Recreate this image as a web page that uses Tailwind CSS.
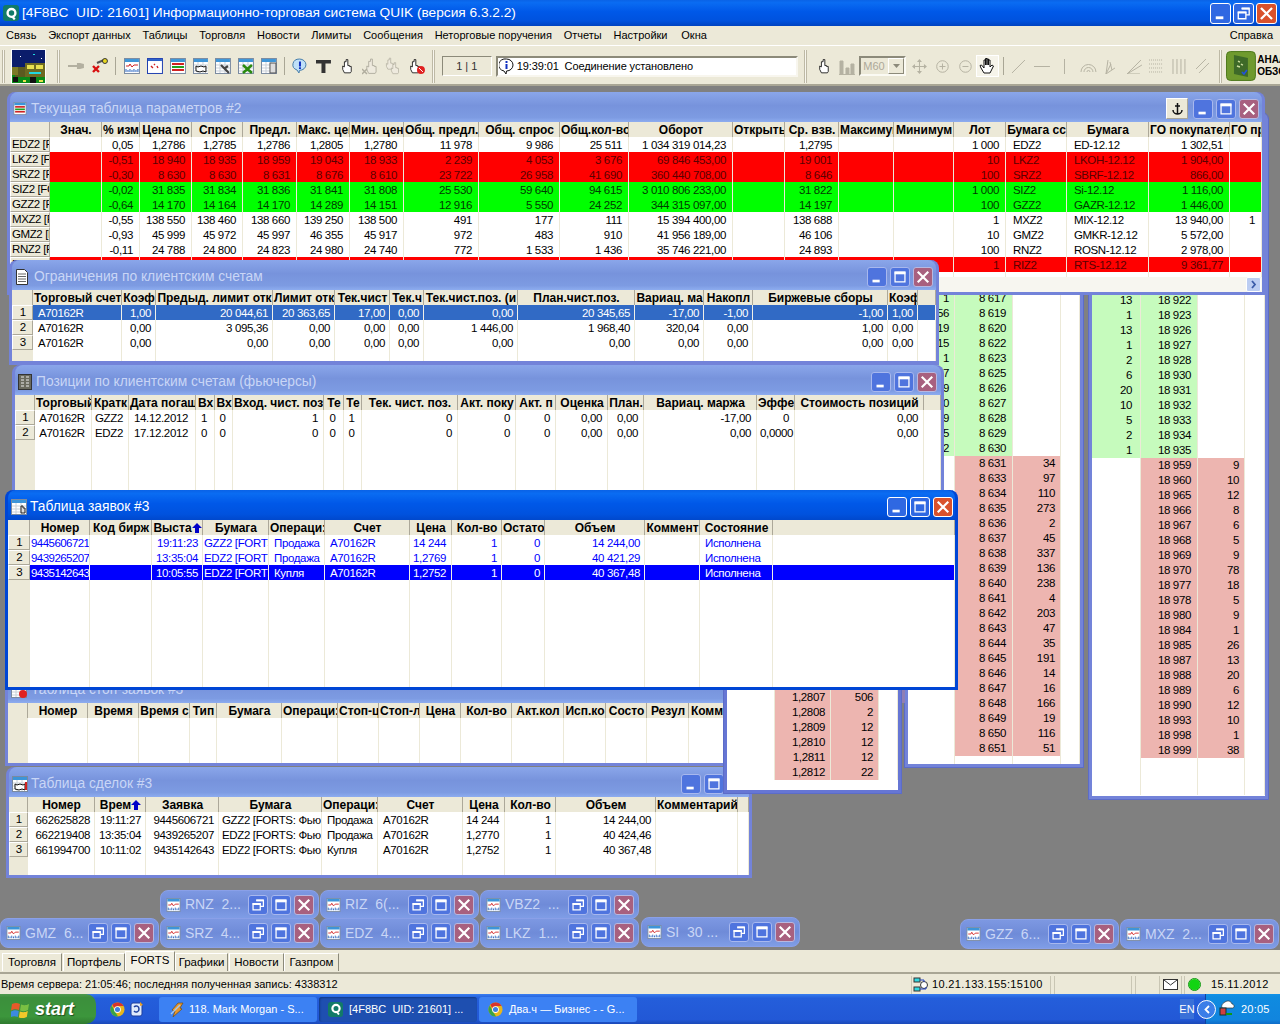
<!DOCTYPE html>
<html lang="ru">
<head>
<meta charset="utf-8">
<title>QUIK</title>
<script src="https://cdn.jsdelivr.net/npm/@tailwindcss/browser@4"></script>
</head>
<body class="m-0 overflow-hidden bg-[#808080]">
<svg class="hidden" xmlns="http://www.w3.org/2000/svg">
  <symbol id="b-min" viewBox="0 0 20 20"><rect x="5" y="13" width="8" height="3" fill="#fff"/></symbol>
  <symbol id="b-max" viewBox="0 0 20 20"><path d="M4.5 4.5h11v11h-11z" fill="none" stroke="#fff" stroke-width="1.4"/><rect x="4" y="4" width="12" height="3" fill="#fff"/></symbol>
  <symbol id="b-res" viewBox="0 0 20 20"><path d="M8 4.5h8v7h-3M4.500 8.500h8v7h-8z" fill="none" stroke="#fff" stroke-width="1.400"/><rect x="4" y="8" width="9" height="2" fill="#fff"/><rect x="8" y="4" width="8" height="2" fill="#fff"/></symbol>
  <symbol id="b-x" viewBox="0 0 20 20"><path d="M5 5l10 10M15 5L5 15" stroke="#fff" stroke-width="2.400" stroke-linecap="square"/></symbol>
  <symbol id="i-chart" viewBox="0 0 16 16"><rect x=".5" y=".5" width="15" height="15" fill="#fff" stroke="#7a8aa0"/><rect x="1" y="1" width="14" height="3" fill="#3d95d8"/><path d="M2 8h3l1-2 2 3 2-2h4" fill="none" stroke="#d02020"/><path d="M2 14v-3M4 14v-2M6 14v-3M8 14v-2M10 14v-3M12 14v-2M14 14v-3" stroke="#2060c0"/></symbol>
  <symbol id="i-table" viewBox="0 0 16 16"><rect x=".5" y=".5" width="15" height="15" fill="#fff" stroke="#7a8aa0"/><rect x="1" y="1" width="14" height="3" fill="#3d95d8"/><path d="M1 7h14M1 10h14M1 13h14M5 4v11M10 4v11" stroke="#c8d0d8"/></symbol>
  <symbol id="i-params" viewBox="0 0 16 16"><rect x=".5" y=".5" width="15" height="15" fill="#fff" stroke="#7a8aa0"/><rect x="1" y="1" width="14" height="3" fill="#3d95d8"/><rect x="2" y="5" width="12" height="2" fill="#d02020"/><rect x="2" y="8" width="12" height="2" fill="#20a020"/><rect x="2" y="11" width="12" height="2" fill="#d02020"/></symbol>
  <symbol id="i-hand" viewBox="0 0 14 18"><path d="M6 1.500h2v7l2 0v1h2v6l-1 1.500H4L2 13V9l2 1V4h2z" fill="#fff" stroke="#111"/></symbol>
  <symbol id="i-hand-g" viewBox="0 0 14 18"><path d="M6 1.500h2v7l2 0v1h2v6l-1 1.500H4L2 13V9l2 1V4h2z" fill="#eeeade" stroke="#b0ad9e"/></symbol>
  <symbol id="i-chrome" viewBox="0 0 16 16"><circle cx="8" cy="8" r="7.500" fill="#e8b61c"/><path d="M8 .5A7.500 7.500 0 0 1 14.500 4.200H8L4.400 6.500 2.500 2.900A7.500 7.500 0 0 1 8 .5z" fill="#d9342b"/><path d="M1.900 3.700 5.200 10l3.400 5.500A7.500 7.500 0 0 1 1.900 3.700z" fill="#3aa347"/><circle cx="8" cy="8" r="3.600" fill="#fff"/><circle cx="8" cy="8" r="2.700" fill="#3f7fe0"/></symbol>
</svg>

<div class="relative flex h-[1024px] w-[1280px] flex-col overflow-hidden font-['Liberation_Sans',sans-serif] text-[11px] leading-[15px] text-black">

  <!-- main title -->
  <header class="flex h-[26px] shrink-0 items-center bg-[linear-gradient(180deg,#0a63e6_0%,#0a6cf2_10%,#0058e8_45%,#0052de_80%,#0043c0_100%)] pl-[3px] pr-[3px]">
    <span class="mr-[3px] flex h-[16px] w-[16px] items-center justify-center rounded-[3px] bg-[#127a68]">
      <svg class="h-[13px] w-[13px]" viewBox="0 0 12 12"><circle cx="6" cy="5.500" r="3.600" fill="none" stroke="#fff" stroke-width="2.200"/><path d="M7 9l2 2.500" stroke="#fff" stroke-width="2"/></svg>
    </span>
    <span class="text-[13.700px] leading-[18px] text-white">[4F8BC&nbsp; UID: 21601] Информационно-торговая система QUIK (версия 6.3.2.2)</span>
    <span class="ml-auto flex gap-[2px]">
      <span class="h-[21px] w-[21px] rounded-[3px] border border-white bg-[#2f68e2]"><svg class="h-full w-full"><use href="#b-min"/></svg></span>
      <span class="h-[21px] w-[21px] rounded-[3px] border border-white bg-[#2f68e2]"><svg class="h-full w-full"><use href="#b-res"/></svg></span>
      <span class="h-[21px] w-[21px] rounded-[3px] border border-white bg-[#d9512c]"><svg class="h-full w-full"><use href="#b-x"/></svg></span>
    </span>
  </header>

  <!-- menu -->
  <nav class="flex h-[20px] shrink-0 items-center gap-[11.800px] border-b border-b-[#fff] bg-[#ece9d8] pl-[6px] pr-[7px]">
    <span>Связь</span><span>Экспорт данных</span><span>Таблицы</span><span>Торговля</span><span>Новости</span><span>Лимиты</span><span>Сообщения</span><span>Неторговые поручения</span><span>Отчеты</span><span>Настройки</span><span class="ml-[2px]">Окна</span><span class="ml-auto">Справка</span>
  </nav>

  <!-- toolbar -->
  <div class="flex h-[40px] shrink-0 items-center border-b-[2px] border-b-[#a9a695] bg-[#ece9d8] pt-[2px]">
    <span class="ml-[2px] h-[33px] w-[3px] border-x border-[#bdb9a5] bg-[#f8f6ee]"></span>
    <svg class="ml-[6px] h-[35px] w-[35px]" viewBox="0 0 35 35" shape-rendering="crispEdges">
      <rect width="35" height="35" fill="#fff"/><rect x="1" y="1" width="33" height="33" fill="#0b1d6b"/>
      <rect x="1" y="22" width="33" height="12" fill="#0b8a18"/>
      <rect x="4" y="18" width="10" height="10" fill="#5c5a20"/><rect x="1" y="18" width="6" height="8" fill="#7b7a26"/>
      <rect x="14" y="14" width="20" height="14" fill="#6d6a22"/><rect x="16" y="16" width="7" height="4" fill="#e8e050"/><rect x="25" y="16" width="7" height="4" fill="#e8e050"/><rect x="18" y="23" width="12" height="2" fill="#20d8e0"/>
      <rect x="2" y="28" width="5" height="5" fill="#111"/><rect x="19" y="28" width="6" height="6" fill="#111"/><rect x="28" y="31" width="4" height="2" fill="#e8e050"/><rect x="12" y="31" width="3" height="2" fill="#e8e050"/>
      <rect x="9" y="7" width="1" height="1" fill="#fff"/><rect x="22" y="5" width="2" height="1" fill="#20d8e0"/><rect x="30" y="9" width="1" height="1" fill="#fff"/>
    </svg>
    <span class="ml-[11px] h-[33px] w-[3px] border-x border-[#bdb9a5] bg-[#f8f6ee]"></span>
    <svg class="ml-[8px] h-[10px] w-[17px]" viewBox="0 0 17 10"><path d="M0 4h9V2h3l4 1v4l-4 1H9V6H0z" fill="#b3b0a0"/></svg>
    <svg class="ml-[7px] h-[16px] w-[16px]" viewBox="0 0 16 16"><path d="M5 5l7-3" stroke="#555" stroke-width="2"/><circle cx="13" cy="3" r="2.500" fill="#e8d820" stroke="#333"/><path d="M1 8l6 6M7 8l-6 6" stroke="#d81010" stroke-width="2.400"/></svg>
    <span class="ml-[7px] h-[18px] w-px bg-[#a9a695]"></span>
    <svg class="ml-[8px] h-[16px] w-[16px]"><use href="#i-chart"/></svg>
    <svg class="ml-[7px] h-[16px] w-[16px]" viewBox="0 0 16 16"><rect x=".5" y=".5" width="15" height="15" fill="#fff" stroke="#2040b0"/><rect x="1" y="1" width="14" height="2" fill="#2a60c8"/><path d="M4 8l2 2M7 6l1 1M10 8l1 2" stroke="#d02020" stroke-width="1.400"/></svg>
    <svg class="ml-[7px] h-[16px] w-[16px]"><use href="#i-params"/></svg>
    <svg class="ml-[7px] h-[16px] w-[16px]" viewBox="0 0 16 16"><use href="#i-table"/><path d="M3 8l2 1 3-1 3 1 2-1v6l-3-1-3 1-4-1z" fill="#fff" stroke="#111"/></svg>
    <svg class="ml-[7px] h-[16px] w-[16px]" viewBox="0 0 16 16"><use href="#i-table"/><path d="M6 7l3 3 5 5M13 8l-4 3" stroke="#444" stroke-width="2.200"/></svg>
    <svg class="ml-[7px] h-[16px] w-[16px]" viewBox="0 0 16 16"><use href="#i-table"/><path d="M5 7l9 8M14 7l-9 8" stroke="#2a8a10" stroke-width="2.600"/></svg>
    <svg class="ml-[7px] h-[16px] w-[16px]" viewBox="0 0 16 16"><use href="#i-table"/><rect x="9" y="5" width="6" height="10" fill="#ddd" stroke="#555"/></svg>
    <span class="ml-[7px] h-[18px] w-px bg-[#a9a695]"></span>
    <svg class="ml-[7px] h-[16px] w-[15px]" viewBox="0 0 15 16"><path d="M7.500 1a6.500 5.700 0 0 1 0 11.400L7 15l-2-3a6.500 5.700 0 0 1 2.500-11z" fill="#bfe0f8" stroke="#457ca8"/><rect x="7" y="3.500" width="2" height="5" fill="#1030c0"/><rect x="7" y="9.300" width="2" height="1.700" fill="#1030c0"/></svg>
    <svg class="ml-[9px] h-[13px] w-[15px]" viewBox="0 0 15 13"><path d="M0 0h15v3.500H9.500V13h-4V3.500H0z" fill="#333"/></svg>
    <svg class="ml-[10px] h-[18px] w-[12px]"><use href="#i-hand"/></svg>
    <svg class="ml-[9px] h-[18px] w-[16px]" viewBox="0 0 16 18"><use href="#i-hand-g" x="3" width="13" height="18"/><path d="M0 12l5 5M5 12l-5 5" stroke="#b0ad9e" stroke-width="1.500"/></svg>
    <svg class="ml-[7px] h-[18px] w-[15px]" viewBox="0 0 15 18"><use href="#i-hand-g" width="10" height="13"/><use href="#i-hand-g" x="5" y="4" width="10" height="14"/></svg>
    <svg class="ml-[9px] h-[18px] w-[17px]" viewBox="0 0 17 18"><use href="#i-hand" width="12" height="18"/><circle cx="12" cy="13" r="4" fill="#e02020"/><path d="M10 11l4 4" stroke="#fff"/></svg>
    <span class="ml-[6px] h-[33px] w-[3px] border-x border-[#bdb9a5] bg-[#f8f6ee]"></span>
    <span class="ml-[7px] flex h-[20px] w-[50px] items-center justify-center border border-t-[#8c8a7a] border-l-[#8c8a7a] border-r-white border-b-white text-[#333]">1 | 1</span>
    <span class="ml-[4px] flex h-[21px] w-[304px] items-center border-[2px] border-t-[#8c8a7a] border-l-[#8c8a7a] border-r-[#f8f6ee] border-b-[#f8f6ee] bg-white">
      <svg class="ml-[1px] h-[17px] w-[15px]" viewBox="0 0 15 17"><path d="M7.500 1a6.500 6 0 0 1 0 12L7 16l-2-3a6.500 6 0 0 1 2.500-12z" fill="#fff" stroke="#111"/><rect x="6.500" y="6" width="2" height="5" fill="#1030c0"/><rect x="6.500" y="3" width="2" height="2" fill="#1030c0"/></svg>
      <span class="ml-[3px] tracking-[-.1px]">19:39:01&nbsp; Соединение установлено</span>
    </span>
    <span class="ml-[6px] h-[33px] w-[3px] border-x border-[#bdb9a5] bg-[#f8f6ee]"></span>
    <svg class="ml-[11px] h-[18px] w-[12px]"><use href="#i-hand"/></svg>
    <svg class="ml-[9px] h-[17px] w-[16px]" viewBox="0 0 16 17"><path d="M0 16.500h16M1 3v13h3V3zM7 10v6h3v-6zM12 6v10h3V6z" fill="#b5b2a2" stroke="#b5b2a2"/></svg>
    <span class="ml-[4px] flex h-[20px] w-[47px] items-center border-[2px] border-t-[#8c8a7a] border-l-[#8c8a7a] border-r-[#fbfaf3] border-b-[#fbfaf3] pl-[2px] text-[#aca899]">M60<span class="ml-auto flex h-[16px] w-[16px] items-center justify-center border border-[#fff] border-r-[#8c8a7a] border-b-[#8c8a7a] bg-[#ece9d8]"><svg class="h-[4px] w-[7px]" viewBox="0 0 7 4"><path d="M0 0h7L3.500 4z" fill="#8c8a7a"/></svg></span></span>
    <svg class="ml-[6px] h-[15px] w-[15px]" viewBox="0 0 15 15"><path d="M7.500 0l2.500 3H5zM7.500 15L5 12h5zM0 7.500L3 5v5zM15 7.500L12 5v5zM7 3h1v9H7zM3 7h9v1H3z" fill="#b5b2a2"/></svg>
    <svg class="ml-[9px] h-[13px] w-[13px]" viewBox="0 0 13 13"><circle cx="6.500" cy="6.500" r="5.800" fill="none" stroke="#b5b2a2"/><path d="M3.500 6.500h6M6.500 3.500v6" stroke="#b5b2a2"/></svg>
    <svg class="ml-[10px] h-[13px] w-[13px]" viewBox="0 0 13 13"><circle cx="6.500" cy="6.500" r="5.800" fill="none" stroke="#b5b2a2"/><path d="M3.500 6.500h6" stroke="#b5b2a2"/></svg>
    <span class="ml-[4px] flex h-[22px] w-[23px] items-center justify-center border border-white bg-[#f6f4ea]"><svg class="h-[18px] w-[16px]" viewBox="0 0 16 18"><path d="M5 8V3h1.500v5M6.500 8V1.500H8V8M8 8V2h1.500v6M9.500 8V3H11v7l2-2 1.500 1-3.500 7H5L2 11 1 8.500 2.500 8 5 11V8" fill="#fff" stroke="#111"/></svg></span>
    <span class="ml-[4px] h-[18px] w-px bg-[#a9a695]"></span>
    <svg class="ml-[7px] h-[15px] w-[15px]" viewBox="0 0 15 15"><path d="M1 14L14 1" stroke="#b5b2a2"/></svg>
    <svg class="ml-[8px] h-[3px] w-[16px]" viewBox="0 0 16 3"><path d="M0 1.500h16" stroke="#b5b2a2"/></svg>
    <svg class="ml-[14px] h-[15px] w-[1px]" viewBox="0 0 1 15"><path d="M.5 0v15" stroke="#b5b2a2"/></svg>
    <svg class="ml-[15px] h-[11px] w-[17px]" viewBox="0 0 17 11"><path d="M1 11a7.500 7.500 0 0 1 15 0M4 11a4.500 4.500 0 0 1 9 0M7 11a1.500 1.500 0 0 1 3 0" fill="none" stroke="#b5b2a2"/></svg>
    <svg class="ml-[8px] h-[15px] w-[11px]" viewBox="0 0 11 15"><path d="M1 15l2-14M1 15l5-10M1 15l9-6M5 3l2 8" fill="none" stroke="#b5b2a2"/></svg>
    <svg class="ml-[11px] h-[15px] w-[15px]" viewBox="0 0 15 15"><path d="M0 15L14 1M0 15L15 6M0 15h13" fill="none" stroke="#b5b2a2"/></svg>
    <svg class="ml-[7px] h-[14px] w-[15px]" viewBox="0 0 15 14"><path d="M0 1h15M0 5h15M0 9h15M0 13h15" stroke="#b5b2a2" stroke-dasharray="1 1"/></svg>
    <svg class="ml-[9px] h-[15px] w-[15px]" viewBox="0 0 15 15"><path d="M1 0v15M5 0v15M9 0v15M13 0v15" stroke="#b5b2a2"/></svg>
    <svg class="ml-[9px] h-[14px] w-[13px]" viewBox="0 0 13 14"><path d="M0 10L10 0M3 14L13 4" stroke="#b5b2a2"/></svg>
    <span class="ml-[10px] h-[33px] w-[3px] border-x border-[#bdb9a5] bg-[#f8f6ee]"></span>
    <svg class="ml-[4px] h-[30px] w-[30px]" viewBox="0 0 30 30"><rect x=".5" y=".5" width="29" height="29" rx="4" fill="#6f9a2e" stroke="#4e7a1c"/><path d="M8 4l14 3v19L8 23z" fill="#3e6a28"/><path d="M12 10l2 1M15 13l2 1M11 15l3 1" stroke="#cfe0a0" stroke-width="1.400"/><path d="M16 21l2 2 3-4" fill="none" stroke="#2050e0" stroke-width="1.600"/></svg>
    <span class="ml-[1px] flex w-[23px] flex-col overflow-hidden whitespace-nowrap text-[10px] font-bold leading-[12px]"><span>АНАЛ</span><span>ОБЗОР</span></span>
  </div>

  <!-- MDI area -->
  <main class="relative flex-1 overflow-hidden bg-[#808080]">

    <!-- Glass 8 -->
    <section class="absolute left-[1089px] top-[27px] h-[686px] w-[179px] rounded-t-[6px] border-[3px] border-[#7383d9] bg-white pt-[177px] outline outline-1 outline-[#5c6cc8]">
      <table class="w-[173px] table-fixed border-separate border-spacing-0 [&_td]:h-[15px] [&_td]:overflow-hidden [&_td]:whitespace-nowrap [&_td]:border-r [&_td]:border-[#ece9d8] [&_td]:px-[5px] [&_td]:text-right [&_td]:text-[11.500px] [&_td]:leading-[15px] [&_td]:tracking-[-.35px]">
        <colgroup><col class="w-[49px]"><col class="w-[57px]"><col class="w-[47px]"><col class="w-[20px]"></colgroup>
        <tbody class="[&_td:nth-child(1)]:pr-[8px] [&_td:nth-child(2)]:pr-[6px]">
          <tr class="bg-[#c6fbbd]"><td>13</td><td>18 922</td><td class="bg-white"></td><td class="bg-white"></td></tr>
          <tr class="bg-[#c6fbbd]"><td>1</td><td>18 923</td><td class="bg-white"></td><td class="bg-white"></td></tr>
          <tr class="bg-[#c6fbbd]"><td>13</td><td>18 926</td><td class="bg-white"></td><td class="bg-white"></td></tr>
          <tr class="bg-[#c6fbbd]"><td>1</td><td>18 927</td><td class="bg-white"></td><td class="bg-white"></td></tr>
          <tr class="bg-[#c6fbbd]"><td>2</td><td>18 928</td><td class="bg-white"></td><td class="bg-white"></td></tr>
          <tr class="bg-[#c6fbbd]"><td>6</td><td>18 930</td><td class="bg-white"></td><td class="bg-white"></td></tr>
          <tr class="bg-[#c6fbbd]"><td>20</td><td>18 931</td><td class="bg-white"></td><td class="bg-white"></td></tr>
          <tr class="bg-[#c6fbbd]"><td>10</td><td>18 932</td><td class="bg-white"></td><td class="bg-white"></td></tr>
          <tr class="bg-[#c6fbbd]"><td>5</td><td>18 933</td><td class="bg-white"></td><td class="bg-white"></td></tr>
          <tr class="bg-[#c6fbbd]"><td>2</td><td>18 934</td><td class="bg-white"></td><td class="bg-white"></td></tr>
          <tr class="bg-[#c6fbbd]"><td>1</td><td>18 935</td><td class="bg-white"></td><td class="bg-white"></td></tr>
          <tr class="bg-[#edb5b0]"><td class="bg-white"></td><td>18 959</td><td>9</td><td class="bg-white"></td></tr>
          <tr class="bg-[#edb5b0]"><td class="bg-white"></td><td>18 960</td><td>10</td><td class="bg-white"></td></tr>
          <tr class="bg-[#edb5b0]"><td class="bg-white"></td><td>18 965</td><td>12</td><td class="bg-white"></td></tr>
          <tr class="bg-[#edb5b0]"><td class="bg-white"></td><td>18 966</td><td>8</td><td class="bg-white"></td></tr>
          <tr class="bg-[#edb5b0]"><td class="bg-white"></td><td>18 967</td><td>6</td><td class="bg-white"></td></tr>
          <tr class="bg-[#edb5b0]"><td class="bg-white"></td><td>18 968</td><td>5</td><td class="bg-white"></td></tr>
          <tr class="bg-[#edb5b0]"><td class="bg-white"></td><td>18 969</td><td>9</td><td class="bg-white"></td></tr>
          <tr class="bg-[#edb5b0]"><td class="bg-white"></td><td>18 970</td><td>78</td><td class="bg-white"></td></tr>
          <tr class="bg-[#edb5b0]"><td class="bg-white"></td><td>18 977</td><td>18</td><td class="bg-white"></td></tr>
          <tr class="bg-[#edb5b0]"><td class="bg-white"></td><td>18 978</td><td>5</td><td class="bg-white"></td></tr>
          <tr class="bg-[#edb5b0]"><td class="bg-white"></td><td>18 980</td><td>9</td><td class="bg-white"></td></tr>
          <tr class="bg-[#edb5b0]"><td class="bg-white"></td><td>18 984</td><td>1</td><td class="bg-white"></td></tr>
          <tr class="bg-[#edb5b0]"><td class="bg-white"></td><td>18 985</td><td>26</td><td class="bg-white"></td></tr>
          <tr class="bg-[#edb5b0]"><td class="bg-white"></td><td>18 987</td><td>13</td><td class="bg-white"></td></tr>
          <tr class="bg-[#edb5b0]"><td class="bg-white"></td><td>18 988</td><td>20</td><td class="bg-white"></td></tr>
          <tr class="bg-[#edb5b0]"><td class="bg-white"></td><td>18 989</td><td>6</td><td class="bg-white"></td></tr>
          <tr class="bg-[#edb5b0]"><td class="bg-white"></td><td>18 990</td><td>12</td><td class="bg-white"></td></tr>
          <tr class="bg-[#edb5b0]"><td class="bg-white"></td><td>18 993</td><td>10</td><td class="bg-white"></td></tr>
          <tr class="bg-[#edb5b0]"><td class="bg-white"></td><td>18 998</td><td>1</td><td class="bg-white"></td></tr>
          <tr class="bg-[#edb5b0]"><td class="bg-white"></td><td>18 999</td><td>38</td><td class="bg-white"></td></tr>
          <tr class="bg-white"><td class="h-[37px]!"></td><td class="h-[37px]!"></td><td class="h-[37px]!"></td><td class="h-[37px]!"></td></tr>
        </tbody>
      </table>
    </section>

    <!-- Glass 7 -->
    <section class="absolute left-[905px] top-[202px] h-[479px] w-[178px] border-[3px] border-[#7383d9] bg-white outline outline-1 outline-[#5c6cc8]">
      <table class="w-[172px] table-fixed border-separate border-spacing-0 [&_td]:h-[15px] [&_td]:overflow-hidden [&_td]:whitespace-nowrap [&_td]:border-r [&_td]:border-[#ece9d8] [&_td]:px-[5px] [&_td]:text-right [&_td]:text-[11.500px] [&_td]:leading-[15px] [&_td]:tracking-[-.35px]">
        <colgroup><col class="w-[47px]"><col class="w-[58px]"><col class="w-[48px]"><col class="w-[19px]"></colgroup>
        <tbody class="[&_td:nth-child(2)]:pr-[6px]">
          <tr class="bg-[#c6fbbd]"><td>1</td><td>8 617</td><td class="bg-white"></td><td class="bg-white"></td></tr>
          <tr class="bg-[#c6fbbd]"><td>56</td><td>8 619</td><td class="bg-white"></td><td class="bg-white"></td></tr>
          <tr class="bg-[#c6fbbd]"><td>19</td><td>8 620</td><td class="bg-white"></td><td class="bg-white"></td></tr>
          <tr class="bg-[#c6fbbd]"><td>15</td><td>8 622</td><td class="bg-white"></td><td class="bg-white"></td></tr>
          <tr class="bg-[#c6fbbd]"><td>1</td><td>8 623</td><td class="bg-white"></td><td class="bg-white"></td></tr>
          <tr class="bg-[#c6fbbd]"><td>47</td><td>8 625</td><td class="bg-white"></td><td class="bg-white"></td></tr>
          <tr class="bg-[#c6fbbd]"><td>9</td><td>8 626</td><td class="bg-white"></td><td class="bg-white"></td></tr>
          <tr class="bg-[#c6fbbd]"><td>10</td><td>8 627</td><td class="bg-white"></td><td class="bg-white"></td></tr>
          <tr class="bg-[#c6fbbd]"><td>9</td><td>8 628</td><td class="bg-white"></td><td class="bg-white"></td></tr>
          <tr class="bg-[#c6fbbd]"><td>5</td><td>8 629</td><td class="bg-white"></td><td class="bg-white"></td></tr>
          <tr class="bg-[#c6fbbd]"><td>2</td><td>8 630</td><td class="bg-white"></td><td class="bg-white"></td></tr>
          <tr class="bg-[#edb5b0]"><td class="bg-white"></td><td>8 631</td><td>34</td><td class="bg-white"></td></tr>
          <tr class="bg-[#edb5b0]"><td class="bg-white"></td><td>8 633</td><td>97</td><td class="bg-white"></td></tr>
          <tr class="bg-[#edb5b0]"><td class="bg-white"></td><td>8 634</td><td>110</td><td class="bg-white"></td></tr>
          <tr class="bg-[#edb5b0]"><td class="bg-white"></td><td>8 635</td><td>273</td><td class="bg-white"></td></tr>
          <tr class="bg-[#edb5b0]"><td class="bg-white"></td><td>8 636</td><td>2</td><td class="bg-white"></td></tr>
          <tr class="bg-[#edb5b0]"><td class="bg-white"></td><td>8 637</td><td>45</td><td class="bg-white"></td></tr>
          <tr class="bg-[#edb5b0]"><td class="bg-white"></td><td>8 638</td><td>337</td><td class="bg-white"></td></tr>
          <tr class="bg-[#edb5b0]"><td class="bg-white"></td><td>8 639</td><td>136</td><td class="bg-white"></td></tr>
          <tr class="bg-[#edb5b0]"><td class="bg-white"></td><td>8 640</td><td>238</td><td class="bg-white"></td></tr>
          <tr class="bg-[#edb5b0]"><td class="bg-white"></td><td>8 641</td><td>4</td><td class="bg-white"></td></tr>
          <tr class="bg-[#edb5b0]"><td class="bg-white"></td><td>8 642</td><td>203</td><td class="bg-white"></td></tr>
          <tr class="bg-[#edb5b0]"><td class="bg-white"></td><td>8 643</td><td>47</td><td class="bg-white"></td></tr>
          <tr class="bg-[#edb5b0]"><td class="bg-white"></td><td>8 644</td><td>35</td><td class="bg-white"></td></tr>
          <tr class="bg-[#edb5b0]"><td class="bg-white"></td><td>8 645</td><td>191</td><td class="bg-white"></td></tr>
          <tr class="bg-[#edb5b0]"><td class="bg-white"></td><td>8 646</td><td>14</td><td class="bg-white"></td></tr>
          <tr class="bg-[#edb5b0]"><td class="bg-white"></td><td>8 647</td><td>16</td><td class="bg-white"></td></tr>
          <tr class="bg-[#edb5b0]"><td class="bg-white"></td><td>8 648</td><td>166</td><td class="bg-white"></td></tr>
          <tr class="bg-[#edb5b0]"><td class="bg-white"></td><td>8 649</td><td>19</td><td class="bg-white"></td></tr>
          <tr class="bg-[#edb5b0]"><td class="bg-white"></td><td>8 650</td><td>116</td><td class="bg-white"></td></tr>
          <tr class="bg-[#edb5b0]"><td class="bg-white"></td><td>8 651</td><td>51</td><td class="bg-white"></td></tr>
          <tr class="bg-white"><td class="h-[8px]!"></td><td class="h-[8px]!"></td><td class="h-[8px]!"></td><td class="h-[8px]!"></td></tr>
        </tbody>
      </table>
    </section>

    <!-- Window 1 -->
    <section class="absolute left-[7px] top-[6px] h-[203px] w-[1258px] rounded-t-[8px] border-x-[3px] border-b-[3px] border-t-0 border-[#7383d9] bg-[#7383d9]">
      <div class="flex h-[30px] items-center rounded-t-[8px] bg-[linear-gradient(180deg,#8aa6ea,#7793dc_45%,#7d9be2_85%,#8dacef)] pl-[3px] pr-0 pt-[3px]">
        <svg class="h-[13px] w-[14px]"><use href="#i-params"/></svg>
        <span class="ml-[4px] text-[13.800px] text-[#c9d6f6]">Текущая таблица параметров #2</span>
        <span class="ml-auto mr-[5px] flex h-[21px] w-[22px] items-center justify-center border border-white border-r-[#aca899] border-b-[#aca899] bg-[#ece9d8]"><svg class="h-[13px] w-[11px]" viewBox="0 0 11 13"><path d="M5.500 1v11M3 4h5M1 8c0 3 3 4 4.500 4S10 11 10 8" fill="none" stroke="#111" stroke-width="1.500"/></svg></span>
        <span class="flex gap-[3px] pr-[3px]">
          <span class="h-[20px] w-[20px] rounded-[3px] border border-[#a8b8ee] bg-[#4f74de]"><svg class="h-full w-full"><use href="#b-min"/></svg></span>
          <span class="h-[20px] w-[20px] rounded-[3px] border border-[#a8b8ee] bg-[#4f74de]"><svg class="h-full w-full"><use href="#b-max"/></svg></span>
          <span class="h-[20px] w-[20px] rounded-[3px] border border-[#b8b8e0] bg-[#a8607f]"><svg class="h-full w-full"><use href="#b-x"/></svg></span>
        </span>
      </div>
      <div class="bg-white">
        <table class="w-[1252px] table-fixed border-separate border-spacing-0 [&_tr]:h-[15px] [&_td]:overflow-hidden [&_td]:whitespace-nowrap [&_td]:border-r [&_td]:border-[#ece9d8] [&_td]:pl-[3px] [&_td]:pr-[6px] [&_td]:pt-[1px] [&_td]:pb-0 [&_td]:text-right [&_td]:text-[11.500px] [&_td]:leading-[14px] [&_td]:tracking-[-.35px] [&_th]:overflow-hidden [&_th]:whitespace-nowrap [&_th]:border-r [&_th]:border-[#aca899] [&_th]:bg-[#ece9d8] [&_th]:p-0 [&_th]:pl-[1px] [&_th]:text-[12px] [&_th]:font-bold [&_th]:leading-[14px] [&_tbody_th]:border-y [&_tbody_th]:border-l [&_tbody_th]:border-[#fff] [&_tbody_th]:border-b-[#aca899] [&_tbody_th]:border-r-[#aca899] [&_tbody_th]:text-left [&_tbody_th]:text-[11.500px] [&_tbody_th]:font-normal [&_tbody_th]:leading-[13px] [&_tbody_th]:tracking-[-.4px] [&_td:nth-child(18)]:pl-[7px] [&_td:nth-child(18)]:text-left [&_td:nth-child(19)]:pl-[7px] [&_td:nth-child(19)]:text-left">
          <colgroup><col class="w-[40px]"><col class="w-[52px]"><col class="w-[38px]"><col class="w-[52px]"><col class="w-[51px]"><col class="w-[54px]"><col class="w-[53px]"><col class="w-[54px]"><col class="w-[75px]"><col class="w-[81px]"><col class="w-[69px]"><col class="w-[104px]"><col class="w-[52px]"><col class="w-[54px]"><col class="w-[55px]"><col class="w-[60px]"><col class="w-[52px]"><col class="w-[61px]"><col class="w-[82px]"><col class="w-[81px]"><col class="w-[32px]"></colgroup>
          <thead><tr><th></th><th>Знач.</th><th>% изм</th><th>Цена по</th><th>Спрос</th><th>Предл.</th><th>Макс. цен</th><th>Мин. цен</th><th>Общ. предл.</th><th>Общ. спрос</th><th>Общ.кол-во</th><th>Оборот</th><th>Открыть</th><th>Ср. взв.</th><th>Максимум</th><th>Минимум</th><th>Лот</th><th>Бумага сс</th><th>Бумага</th><th>ГО покупатель</th><th>ГО пр</th></tr></thead>
          <tbody>
            <tr><th>EDZ2 [F</th><td></td><td>0,05</td><td>1,2786</td><td>1,2785</td><td>1,2786</td><td>1,2805</td><td>1,2780</td><td>11 978</td><td>9 986</td><td>25 511</td><td>1 034 319 014,23</td><td></td><td>1,2795</td><td></td><td></td><td>1 000</td><td>EDZ2</td><td>ED-12.12</td><td>1 302,51</td><td></td></tr>
            <tr class="bg-[#ff0000] text-[#5a0000]"><th class="text-black">LKZ2 [F</th><td></td><td>-0,51</td><td>18 940</td><td>18 935</td><td>18 959</td><td>19 043</td><td>18 933</td><td>2 239</td><td>4 053</td><td>3 676</td><td>69 846 453,00</td><td></td><td>19 001</td><td></td><td></td><td>10</td><td>LKZ2</td><td>LKOH-12.12</td><td>1 904,00</td><td></td></tr>
            <tr class="bg-[#ff0000] text-[#5a0000]"><th class="text-black">SRZ2 [F</th><td></td><td>-0,30</td><td>8 630</td><td>8 630</td><td>8 631</td><td>8 676</td><td>8 610</td><td>23 722</td><td>26 958</td><td>41 690</td><td>360 440 708,00</td><td></td><td>8 646</td><td></td><td></td><td>100</td><td>SRZ2</td><td>SBRF-12.12</td><td>866,00</td><td></td></tr>
            <tr class="bg-[#00ff00] text-[#003a00]"><th class="text-black">SIZ2 [FC</th><td></td><td>-0,02</td><td>31 835</td><td>31 834</td><td>31 836</td><td>31 841</td><td>31 808</td><td>25 530</td><td>59 640</td><td>94 615</td><td>3 010 806 233,00</td><td></td><td>31 822</td><td></td><td></td><td>1 000</td><td>SIZ2</td><td>Si-12.12</td><td>1 116,00</td><td></td></tr>
            <tr class="bg-[#00ff00] text-[#003a00]"><th class="text-black">GZZ2 [F</th><td></td><td>-0,64</td><td>14 170</td><td>14 164</td><td>14 170</td><td>14 289</td><td>14 151</td><td>12 916</td><td>5 550</td><td>24 252</td><td>344 315 097,00</td><td></td><td>14 197</td><td></td><td></td><td>100</td><td>GZZ2</td><td>GAZR-12.12</td><td>1 446,00</td><td></td></tr>
            <tr><th>MXZ2 [F</th><td></td><td>-0,55</td><td>138 550</td><td>138 460</td><td>138 660</td><td>139 250</td><td>138 500</td><td>491</td><td>177</td><td>111</td><td>15 394 400,00</td><td></td><td>138 688</td><td></td><td></td><td>1</td><td>MXZ2</td><td>MIX-12.12</td><td>13 940,00</td><td>1</td></tr>
            <tr><th>GMZ2 [F</th><td></td><td>-0,93</td><td>45 999</td><td>45 972</td><td>45 997</td><td>46 355</td><td>45 917</td><td>972</td><td>483</td><td>910</td><td>41 956 189,00</td><td></td><td>46 106</td><td></td><td></td><td>10</td><td>GMZ2</td><td>GMKR-12.12</td><td>5 572,00</td><td></td></tr>
            <tr><th>RNZ2 [F</th><td></td><td>-0,11</td><td>24 788</td><td>24 800</td><td>24 823</td><td>24 980</td><td>24 740</td><td>772</td><td>1 533</td><td>1 436</td><td>35 746 221,00</td><td></td><td>24 893</td><td></td><td></td><td>100</td><td>RNZ2</td><td>ROSN-12.12</td><td>2 978,00</td><td></td></tr>
            <tr class="bg-[#ff0000] text-[#5a0000]"><th class="text-black">RIZ2 [F</th><td></td><td></td><td></td><td></td><td></td><td></td><td></td><td></td><td></td><td></td><td></td><td></td><td></td><td></td><td></td><td>1</td><td>RIZ2</td><td>RTS-12.12</td><td>9 361,77</td><td></td></tr>
            <tr class="h-[5px]!"><th class="border-0!"></th><td class="p-0!"></td><td class="p-0!"></td><td class="p-0!"></td><td class="p-0!"></td><td class="p-0!"></td><td class="p-0!"></td><td class="p-0!"></td><td class="p-0!"></td><td class="p-0!"></td><td class="p-0!"></td><td class="p-0!"></td><td class="p-0!"></td><td class="p-0!"></td><td class="p-0!"></td><td class="p-0!"></td><td class="p-0!"></td><td class="p-0!"></td><td class="p-0!"></td><td class="p-0!"></td><td class="p-0!"></td></tr>
          </tbody>
        </table>
        <div class="flex h-[15px] justify-end bg-[#f7f6f0] pr-[1px]"><span class="flex h-[15px] w-[15px] items-center justify-center rounded-[2px] border border-white bg-[#bccdf2]"><svg class="h-[9px] w-[6px]" viewBox="0 0 6 9"><path d="M1 1l3 3.500L1 8" fill="none" stroke="#3a5aa8" stroke-width="1.800"/></svg></span></div>
      </div>
    </section>

    <!-- Window 5 stop orders -->
    <section class="absolute left-[5px] top-[587px] h-[93px] w-[730px] rounded-t-[8px] border-x-[3px] border-b-[3px] border-t-0 border-[#7383d9] bg-[#7383d9]">
      <div class="flex h-[30px] items-center rounded-t-[8px] bg-[linear-gradient(180deg,#8aa6ea,#7793dc_45%,#7d9be2_85%,#8dacef)] pl-[3px] pt-[3px]">
        <svg class="h-[16px] w-[16px]" viewBox="0 0 16 16"><use href="#i-table"/><circle cx="12" cy="12" r="4" fill="#e02020"/></svg>
        <span class="ml-[4px] text-[13.800px] text-[#c9d6f6]">Таблица стоп-заявок #3</span>
      </div>
      <div class="bg-white">
        <table class="w-[717px] table-fixed border-separate border-spacing-0 [&_tr]:h-[15px] [&_td]:border-r [&_td]:border-[#ece9d8] [&_td]:p-0 [&_th]:overflow-hidden [&_th]:whitespace-nowrap [&_th]:border-r [&_th]:border-[#aca899] [&_th]:bg-[#ece9d8] [&_th]:p-0 [&_th]:pl-[1px] [&_th]:text-[12px] [&_th]:font-bold [&_th]:leading-[14px]">
          <colgroup><col class="w-[20px]"><col class="w-[60px]"><col class="w-[51px]"><col class="w-[51px]"><col class="w-[27px]"><col class="w-[65px]"><col class="w-[56px]"><col class="w-[41px]"><col class="w-[41px]"><col class="w-[41px]"><col class="w-[51px]"><col class="w-[52px]"><col class="w-[42px]"><col class="w-[41px]"><col class="w-[42px]"><col class="w-[36px]"></colgroup>
          <thead><tr><th></th><th>Номер</th><th>Время</th><th>Время с</th><th>Тип</th><th>Бумага</th><th>Операци:</th><th>Стоп-ц</th><th>Стоп-л</th><th>Цена</th><th>Кол-во</th><th>Акт.кол</th><th>Исп.ко</th><th>Состо</th><th>Резул</th><th>Комм</th></tr></thead>
          <tbody><tr class="h-[45px]!"><th class="border-0!"></th><td></td><td></td><td></td><td></td><td></td><td></td><td></td><td></td><td></td><td></td><td></td><td></td><td></td><td></td><td></td></tr></tbody>
        </table>
      </div>
    </section>

    <!-- Window 9 trades -->
    <section class="absolute left-[6px] top-[681px] h-[111px] w-[746px] rounded-t-[8px] border-x-[3px] border-b-[3px] border-t-0 border-[#7383d9] bg-[#7383d9]">
      <div class="flex h-[30px] items-center rounded-t-[8px] bg-[linear-gradient(180deg,#8aa6ea,#7793dc_45%,#7d9be2_85%,#8dacef)] pl-[3px] pt-[3px]">
        <svg class="h-[16px] w-[16px]" viewBox="0 0 16 16"><use href="#i-table"/><path d="M3 8l2 1 3-1 3 1 2-1v6l-3-1-3 1-4-1z" fill="#fff" stroke="#111"/><rect x="13" y="6" width="2" height="8" fill="#d02020"/></svg>
        <span class="ml-[3px] text-[13.800px] text-[#c9d6f6]">Таблица сделок #3</span>
        <span class="ml-auto flex gap-[3px] pr-[2px]">
          <span class="h-[20px] w-[20px] rounded-[3px] border border-[#a8b8ee] bg-[#4f74de]"><svg class="h-full w-full"><use href="#b-min"/></svg></span>
          <span class="h-[20px] w-[20px] rounded-[3px] border border-[#a8b8ee] bg-[#4f74de]"><svg class="h-full w-full"><use href="#b-max"/></svg></span>
          <span class="h-[20px] w-[20px] rounded-[3px] border border-[#b8b8e0] bg-[#a8607f]"><svg class="h-full w-full"><use href="#b-x"/></svg></span>
        </span>
      </div>
      <div class="bg-white">
        <table class="w-[740px] table-fixed border-separate border-spacing-0 [&_tr]:h-[15px] [&_td]:overflow-hidden [&_td]:whitespace-nowrap [&_td]:border-r [&_td]:border-[#ece9d8] [&_td]:pl-[3px] [&_td]:pr-[4px] [&_td]:pt-[1px] [&_td]:pb-0 [&_td]:text-right [&_td]:text-[11.500px] [&_td]:leading-[14px] [&_td]:tracking-[-.35px] [&_th]:overflow-hidden [&_th]:whitespace-nowrap [&_th]:border-r [&_th]:border-[#aca899] [&_th]:bg-[#ece9d8] [&_th]:p-0 [&_th]:pl-[1px] [&_th]:text-[12px] [&_th]:font-bold [&_th]:leading-[14px] [&_tbody_th]:border-y [&_tbody_th]:border-l [&_tbody_th]:border-[#fff] [&_tbody_th]:border-b-[#aca899] [&_tbody_th]:border-r-[#aca899] [&_tbody_th]:text-[11.500px] [&_tbody_th]:font-normal [&_tbody_th]:leading-[13px] [&_td:nth-child(5)]:text-left [&_td:nth-child(6)]:pl-[5px] [&_td:nth-child(6)]:text-left [&_td:nth-child(7)]:pl-[5px] [&_td:nth-child(7)]:text-left [&_td:nth-child(8)]:text-left">
          <colgroup><col class="w-[19px]"><col class="w-[67px]"><col class="w-[51px]"><col class="w-[73px]"><col class="w-[103px]"><col class="w-[56px]"><col class="w-[85px]"><col class="w-[42px]"><col class="w-[51px]"><col class="w-[100px]"><col class="w-[82px]"><col class="w-[11px]"></colgroup>
          <thead><tr><th></th><th>Номер</th><th>Врем<svg class="inline h-[10px] w-[10px] align-[-1px]" viewBox="0 0 10 10"><path d="M5 0l5 5H7v5H3V5H0z" fill="#0000c8"/></svg></th><th>Заявка</th><th>Бумага</th><th>Операци:</th><th>Счет</th><th>Цена</th><th>Кол-во</th><th>Объем</th><th>Комментарий</th><th></th></tr></thead>
          <tbody>
            <tr><th>1</th><td>662625828</td><td>19:11:27</td><td>9445606721</td><td>GZZ2 [FORTS: Фью</td><td>Продажа</td><td>A70162R</td><td>14 244</td><td>1</td><td>14 244,00</td><td></td><td></td></tr>
            <tr><th>2</th><td>662219408</td><td>13:35:04</td><td>9439265207</td><td>EDZ2 [FORTS: Фью</td><td>Продажа</td><td>A70162R</td><td>1,2770</td><td>1</td><td>40 424,46</td><td></td><td></td></tr>
            <tr><th>3</th><td>661994700</td><td>10:11:02</td><td>9435142643</td><td>EDZ2 [FORTS: Фью</td><td>Купля</td><td>A70162R</td><td>1,2752</td><td>1</td><td>40 367,48</td><td></td><td></td></tr>
            <tr class="h-[18px]!"><th class="border-0!"></th><td></td><td></td><td></td><td></td><td></td><td></td><td></td><td></td><td></td><td></td><td></td></tr>
          </tbody>
        </table>
      </div>
    </section>

    <!-- Glass 6 -->
    <section class="absolute left-[724px] top-[594px] h-[113px] w-[177px] border-[3px] border-[#6676d4] bg-white pt-[7px] outline outline-1 outline-[#5c6cc8]">
      <table class="w-[171px] table-fixed border-separate border-spacing-0 [&_td]:h-[15px] [&_td]:overflow-hidden [&_td]:whitespace-nowrap [&_td]:border-r [&_td]:border-[#ece9d8] [&_td]:px-[5px] [&_td]:text-right [&_td]:text-[11.500px] [&_td]:leading-[15px] [&_td]:tracking-[-.35px]">
        <colgroup><col class="w-[48px]"><col class="w-[56px]"><col class="w-[48px]"><col class="w-[19px]"></colgroup>
        <tbody>
          <tr class="bg-[#edb5b0]"><td class="bg-white"></td><td>1,2807</td><td>506</td><td class="bg-white"></td></tr>
          <tr class="bg-[#edb5b0]"><td class="bg-white"></td><td>1,2808</td><td>2</td><td class="bg-white"></td></tr>
          <tr class="bg-[#edb5b0]"><td class="bg-white"></td><td>1,2809</td><td>12</td><td class="bg-white"></td></tr>
          <tr class="bg-[#edb5b0]"><td class="bg-white"></td><td>1,2810</td><td>12</td><td class="bg-white"></td></tr>
          <tr class="bg-[#edb5b0]"><td class="bg-white"></td><td>1,2811</td><td>12</td><td class="bg-white"></td></tr>
          <tr class="bg-[#edb5b0]"><td class="bg-white"></td><td>1,2812</td><td>22</td><td class="bg-white"></td></tr>
        </tbody>
      </table>
    </section>
    <span class="absolute left-[902px] top-[604px] h-[13px] w-[3px] bg-[#8f7fb4]"></span>

    <!-- Window 2 -->
    <section class="absolute left-[9px] top-[174px] h-[105px] w-[930px] rounded-t-[8px] border-x-[3px] border-b-[3px] border-t-0 border-[#7383d9] bg-[#7383d9]">
      <div class="flex h-[30px] items-center rounded-t-[8px] bg-[linear-gradient(180deg,#8aa6ea,#7793dc_45%,#7d9be2_85%,#8dacef)] pl-[3px] pt-[3px]">
        <svg class="h-[16px] w-[14px]" viewBox="0 0 14 16"><path d="M1.500.5h8l3 3v12h-11z" fill="#fff" stroke="#333"/><path d="M3 5h8M3 7.500h8M3 10h8M3 12.500h8" stroke="#666"/></svg>
        <span class="ml-[5px] text-[13.800px] text-[#c9d6f6]">Ограничения по клиентским счетам</span>
        <span class="ml-auto flex gap-[3px] pr-[3px]">
          <span class="h-[20px] w-[20px] rounded-[3px] border border-[#a8b8ee] bg-[#4f74de]"><svg class="h-full w-full"><use href="#b-min"/></svg></span>
          <span class="h-[20px] w-[20px] rounded-[3px] border border-[#a8b8ee] bg-[#4f74de]"><svg class="h-full w-full"><use href="#b-max"/></svg></span>
          <span class="h-[20px] w-[20px] rounded-[3px] border border-[#b8b8e0] bg-[#a8607f]"><svg class="h-full w-full"><use href="#b-x"/></svg></span>
        </span>
      </div>
      <div class="bg-white">
        <table class="w-[924px] table-fixed border-separate border-spacing-0 [&_tr]:h-[15px] [&_td]:overflow-hidden [&_td]:whitespace-nowrap [&_td]:border-r [&_td]:border-[#ece9d8] [&_td]:pl-[3px] [&_td]:pr-[4px] [&_td]:pt-[1px] [&_td]:pb-0 [&_td]:text-right [&_td]:text-[11.500px] [&_td]:leading-[14px] [&_td]:tracking-[-.35px] [&_th]:overflow-hidden [&_th]:whitespace-nowrap [&_th]:border-r [&_th]:border-[#aca899] [&_th]:bg-[#ece9d8] [&_th]:p-0 [&_th]:pl-[1px] [&_th]:text-[12px] [&_th]:font-bold [&_th]:leading-[14px] [&_tbody_th]:border-y [&_tbody_th]:border-l [&_tbody_th]:border-[#fff] [&_tbody_th]:border-b-[#aca899] [&_tbody_th]:border-r-[#aca899] [&_tbody_th]:text-[11.500px] [&_tbody_th]:font-normal [&_tbody_th]:leading-[13px] [&_td:nth-child(2)]:pl-[5px] [&_td:nth-child(2)]:text-left">
          <colgroup><col class="w-[21px]"><col class="w-[89px]"><col class="w-[34px]"><col class="w-[117px]"><col class="w-[62px]"><col class="w-[55px]"><col class="w-[34px]"><col class="w-[94px]"><col class="w-[117px]"><col class="w-[69px]"><col class="w-[49px]"><col class="w-[135px]"><col class="w-[30px]"><col class="w-[18px]"></colgroup>
          <thead><tr><th></th><th>Торговый счет</th><th>Коэф</th><th>Предыд. лимит отк</th><th>Лимит отк</th><th>Тек.чист</th><th>Тек.ч</th><th>Тек.чист.поз. (и</th><th>План.чист.поз.</th><th>Вариац. ма</th><th>Накопл</th><th>Биржевые сборы</th><th>Коэф</th><th></th></tr></thead>
          <tbody>
            <tr class="bg-[#316ac5] text-white [&_td]:border-[#f0f0e8]"><th class="text-black">1</th><td>A70162R</td><td>1,00</td><td>20 044,61</td><td>20 363,65</td><td>17,00</td><td>0,00</td><td>0,00</td><td>20 345,65</td><td>-17,00</td><td>-1,00</td><td>-1,00</td><td>1,00</td><td></td></tr>
            <tr><th>2</th><td>A70162R</td><td>0,00</td><td>3 095,36</td><td>0,00</td><td>0,00</td><td>0,00</td><td>1 446,00</td><td>1 968,40</td><td>320,04</td><td>0,00</td><td>1,00</td><td>0,00</td><td></td></tr>
            <tr><th>3</th><td>A70162R</td><td>0,00</td><td>0,00</td><td>0,00</td><td>0,00</td><td>0,00</td><td>0,00</td><td>0,00</td><td>0,00</td><td>0,00</td><td>0,00</td><td>0,00</td><td></td></tr>
            <tr class="h-[11px]!"><th class="border-0!"></th><td class="p-0!"></td><td class="p-0!"></td><td class="p-0!"></td><td class="p-0!"></td><td class="p-0!"></td><td class="p-0!"></td><td class="p-0!"></td><td class="p-0!"></td><td class="p-0!"></td><td class="p-0!"></td><td class="p-0!"></td><td class="p-0!"></td><td class="p-0!"></td></tr>
          </tbody>
        </table>
      </div>
    </section>

    <!-- Window 3 -->
    <section class="absolute left-[12px] top-[279px] h-[145px] w-[932px] rounded-t-[8px] border-x-[3px] border-b-[3px] border-t-0 border-[#7383d9] bg-[#7383d9]">
      <div class="flex h-[30px] items-center rounded-t-[8px] bg-[linear-gradient(180deg,#8aa6ea,#7793dc_45%,#7d9be2_85%,#8dacef)] pl-[3px] pt-[3px]">
        <svg class="h-[16px] w-[14px]" viewBox="0 0 14 16"><rect x=".5" y=".5" width="13" height="15" fill="#6a6a5e" stroke="#333"/><path d="M3 3h3M8 3h3M3 6h3M8 6h3M3 9h3M8 9h3M3 12h3M8 12h3" stroke="#eee"/></svg>
        <span class="ml-[4px] text-[13.800px] text-[#c9d6f6]">Позиции по клиентским счетам (фьючерсы)</span>
        <span class="ml-auto flex gap-[3px] pr-[4px]">
          <span class="h-[20px] w-[20px] rounded-[3px] border border-[#a8b8ee] bg-[#4f74de]"><svg class="h-full w-full"><use href="#b-min"/></svg></span>
          <span class="h-[20px] w-[20px] rounded-[3px] border border-[#a8b8ee] bg-[#4f74de]"><svg class="h-full w-full"><use href="#b-max"/></svg></span>
          <span class="h-[20px] w-[20px] rounded-[3px] border border-[#b8b8e0] bg-[#a8607f]"><svg class="h-full w-full"><use href="#b-x"/></svg></span>
        </span>
      </div>
      <div class="bg-white">
        <table class="w-[926px] table-fixed border-separate border-spacing-0 [&_tr]:h-[15px] [&_td]:overflow-hidden [&_td]:whitespace-nowrap [&_td]:border-r [&_td]:border-[#ece9d8] [&_td]:pl-[3px] [&_td]:pr-[5px] [&_td]:pt-[1px] [&_td]:pb-0 [&_td]:text-right [&_td]:text-[11.500px] [&_td]:leading-[14px] [&_td]:tracking-[-.35px] [&_th]:overflow-hidden [&_th]:whitespace-nowrap [&_th]:border-r [&_th]:border-[#aca899] [&_th]:bg-[#ece9d8] [&_th]:p-0 [&_th]:pl-[1px] [&_th]:text-[12px] [&_th]:font-bold [&_th]:leading-[14px] [&_tbody_th]:border-y [&_tbody_th]:border-l [&_tbody_th]:border-[#fff] [&_tbody_th]:border-b-[#aca899] [&_tbody_th]:border-r-[#aca899] [&_tbody_th]:text-[11.500px] [&_tbody_th]:font-normal [&_tbody_th]:leading-[13px] [&_td:nth-child(2)]:text-center [&_td:nth-child(3)]:text-center [&_td:nth-child(4)]:text-center [&_td:nth-child(5)]:text-center [&_td:nth-child(6)]:text-center [&_td:nth-child(8)]:text-center [&_td:nth-child(9)]:text-center">
          <colgroup><col class="w-[20px]"><col class="w-[57px]"><col class="w-[37px]"><col class="w-[67px]"><col class="w-[19px]"><col class="w-[18px]"><col class="w-[91px]"><col class="w-[20px]"><col class="w-[18px]"><col class="w-[96px]"><col class="w-[58px]"><col class="w-[40px]"><col class="w-[52px]"><col class="w-[36px]"><col class="w-[113px]"><col class="w-[38px]"><col class="w-[129px]"><col class="w-[17px]"></colgroup>
          <thead><tr><th></th><th>Торговый</th><th>Кратк</th><th>Дата погаш</th><th>Вх</th><th>Вх</th><th>Вход. чист. поз</th><th>Те</th><th>Те</th><th>Тек. чист. поз.</th><th>Акт. поку</th><th>Акт. п</th><th>Оценка</th><th>План.</th><th>Вариац. маржа</th><th>Эффе</th><th>Стоимость позиций</th><th></th></tr></thead>
          <tbody>
            <tr><th>1</th><td>A70162R</td><td>GZZ2</td><td>14.12.2012</td><td>1</td><td>0</td><td>1</td><td>0</td><td>1</td><td>0</td><td>0</td><td>0</td><td>0,00</td><td>0,00</td><td>-17,00</td><td>0</td><td>0,00</td><td></td></tr>
            <tr><th>2</th><td>A70162R</td><td>EDZ2</td><td>17.12.2012</td><td>0</td><td>0</td><td>0</td><td>0</td><td>0</td><td>0</td><td>0</td><td>0</td><td>0,00</td><td>0,00</td><td>0,00</td><td>0,0000</td><td>0,00</td><td></td></tr>
            <tr class="h-[67px]!"><th class="border-0!"></th><td></td><td></td><td></td><td></td><td></td><td></td><td></td><td></td><td></td><td></td><td></td><td></td><td></td><td></td><td></td><td></td><td></td></tr>
          </tbody>
        </table>
      </div>
    </section>

    <!-- Window 4 active -->
    <section class="absolute left-[5px] top-[404px] h-[200px] w-[953px] rounded-t-[8px] border-x-[3px] border-b-[3px] border-t-0 border-[#0046d5] bg-[#0046d5]">
      <div class="flex h-[30px] items-center rounded-t-[8px] bg-[linear-gradient(180deg,#0a62e6,#0a6cf2_12%,#0058e8_45%,#0052de_80%,#0048cc)] pl-[3px] pt-[3px]">
        <svg class="h-[16px] w-[16px]" viewBox="0 0 16 16"><use href="#i-table"/><path d="M10 7v7h4V9h-2V7z" fill="#ddd" stroke="#222"/></svg>
        <span class="ml-[3px] text-[13.800px] text-white">Таблица заявок #3</span>
        <span class="ml-auto flex gap-[3px] pr-[2px]">
          <span class="h-[20px] w-[20px] rounded-[3px] border border-white bg-[#2f68e2]"><svg class="h-full w-full"><use href="#b-min"/></svg></span>
          <span class="h-[20px] w-[20px] rounded-[3px] border border-white bg-[#2f68e2]"><svg class="h-full w-full"><use href="#b-max"/></svg></span>
          <span class="h-[20px] w-[20px] rounded-[3px] border border-white bg-[#d9512c]"><svg class="h-full w-full"><use href="#b-x"/></svg></span>
        </span>
      </div>
      <div class="bg-white">
        <table class="w-[947px] table-fixed border-separate border-spacing-0 text-[#0000ff] [&_tr]:h-[15px] [&_td]:overflow-hidden [&_td]:whitespace-nowrap [&_td]:border-r [&_td]:border-[#ece9d8] [&_td]:pl-[3px] [&_td]:pr-[4px] [&_td]:pt-[1px] [&_td]:pb-0 [&_td]:text-right [&_td]:text-[11.500px] [&_td]:leading-[14px] [&_td]:tracking-[-.35px] [&_th]:overflow-hidden [&_th]:whitespace-nowrap [&_th]:border-r [&_th]:border-[#aca899] [&_th]:bg-[#ece9d8] [&_th]:p-0 [&_th]:pl-[1px] [&_th]:text-[12px] [&_th]:font-bold [&_th]:leading-[14px] [&_th]:text-black [&_tbody_th]:border-y [&_tbody_th]:border-l [&_tbody_th]:border-[#fff] [&_tbody_th]:border-b-[#aca899] [&_tbody_th]:border-r-[#aca899] [&_tbody_th]:text-[11.500px] [&_tbody_th]:font-normal [&_tbody_th]:leading-[13px] [&_td:nth-child(2)]:pl-[1px] [&_td:nth-child(2)]:pr-0 [&_td:nth-child(2)]:text-left [&_td:nth-child(2)]:tracking-[-.55px] [&_td:nth-child(5)]:pl-[1px] [&_td:nth-child(5)]:pr-0 [&_td:nth-child(5)]:text-left [&_td:nth-child(6)]:pl-[5px] [&_td:nth-child(6)]:text-left [&_td:nth-child(7)]:pl-[5px] [&_td:nth-child(7)]:text-left [&_td:nth-child(8)]:text-left [&_td:nth-child(13)]:pl-[5px] [&_td:nth-child(13)]:text-left">
          <colgroup><col class="w-[22px]"><col class="w-[60px]"><col class="w-[62px]"><col class="w-[51px]"><col class="w-[66px]"><col class="w-[56px]"><col class="w-[85px]"><col class="w-[42px]"><col class="w-[50px]"><col class="w-[43px]"><col class="w-[100px]"><col class="w-[55px]"><col class="w-[73px]"><col class="w-[182px]"></colgroup>
          <thead><tr><th></th><th>Номер</th><th>Код бирж</th><th>Выста<svg class="inline h-[10px] w-[10px] align-[-1px]" viewBox="0 0 10 10"><path d="M5 0l5 5H7v5H3V5H0z" fill="#0000c8"/></svg></th><th>Бумага</th><th>Операци:</th><th>Счет</th><th>Цена</th><th>Кол-во</th><th>Остато</th><th>Объем</th><th>Коммент</th><th>Состояние</th><th></th></tr></thead>
          <tbody>
            <tr><th>1</th><td>9445606721</td><td></td><td>19:11:23</td><td>GZZ2 [FORTS</td><td>Продажа</td><td>A70162R</td><td>14 244</td><td>1</td><td>0</td><td>14 244,00</td><td></td><td>Исполнена</td><td></td></tr>
            <tr><th>2</th><td>9439265207</td><td></td><td>13:35:04</td><td>EDZ2 [FORTS</td><td>Продажа</td><td>A70162R</td><td>1,2769</td><td>1</td><td>0</td><td>40 421,29</td><td></td><td>Исполнена</td><td></td></tr>
            <tr class="bg-[#0000ff] text-white [&_td]:border-[#f0f0e8]"><th>3</th><td>9435142643</td><td></td><td>10:05:55</td><td>EDZ2 [FORTS</td><td>Купля</td><td>A70162R</td><td>1,2752</td><td>1</td><td>0</td><td>40 367,48</td><td></td><td>Исполнена</td><td></td></tr>
            <tr class="h-[107px]!"><th class="border-0!"></th><td></td><td></td><td></td><td></td><td></td><td></td><td></td><td></td><td></td><td></td><td></td><td></td><td></td></tr>
          </tbody>
        </table>
      </div>
    </section>

    <!-- minimized windows -->
    <div class="absolute left-[160px] top-[804px] flex h-[29px] w-[159px] items-center rounded-[8px] border border-[#8aa0e8] bg-[linear-gradient(180deg,#7d98e2,#6f8bd8_50%,#7f9de6)] pl-[5px] pr-[4px] text-[14px] text-[#c9d6f6]"><svg class="h-[14px] w-[15px] shrink-0"><use href="#i-chart"/></svg><span class="ml-[4px] w-[58px] overflow-hidden whitespace-nowrap">RNZ&nbsp; 2...</span><span class="ml-auto flex gap-[3px]"><span class="h-[20px] w-[20px] rounded-[3px] border border-[#a8b8ee] bg-[#4f74de]"><svg class="h-full w-full"><use href="#b-res"/></svg></span><span class="h-[20px] w-[20px] rounded-[3px] border border-[#a8b8ee] bg-[#4f74de]"><svg class="h-full w-full"><use href="#b-max"/></svg></span><span class="h-[20px] w-[20px] rounded-[3px] border border-[#b8b8e0] bg-[#a8607f]"><svg class="h-full w-full"><use href="#b-x"/></svg></span></span></div>
    <div class="absolute left-[320px] top-[804px] flex h-[29px] w-[159px] items-center rounded-[8px] border border-[#8aa0e8] bg-[linear-gradient(180deg,#7d98e2,#6f8bd8_50%,#7f9de6)] pl-[5px] pr-[4px] text-[14px] text-[#c9d6f6]"><svg class="h-[14px] w-[15px] shrink-0"><use href="#i-chart"/></svg><span class="ml-[4px] w-[58px] overflow-hidden whitespace-nowrap">RIZ&nbsp; 6(...</span><span class="ml-auto flex gap-[3px]"><span class="h-[20px] w-[20px] rounded-[3px] border border-[#a8b8ee] bg-[#4f74de]"><svg class="h-full w-full"><use href="#b-res"/></svg></span><span class="h-[20px] w-[20px] rounded-[3px] border border-[#a8b8ee] bg-[#4f74de]"><svg class="h-full w-full"><use href="#b-max"/></svg></span><span class="h-[20px] w-[20px] rounded-[3px] border border-[#b8b8e0] bg-[#a8607f]"><svg class="h-full w-full"><use href="#b-x"/></svg></span></span></div>
    <div class="absolute left-[480px] top-[804px] flex h-[29px] w-[159px] items-center rounded-[8px] border border-[#8aa0e8] bg-[linear-gradient(180deg,#7d98e2,#6f8bd8_50%,#7f9de6)] pl-[5px] pr-[4px] text-[14px] text-[#c9d6f6]"><svg class="h-[14px] w-[15px] shrink-0"><use href="#i-chart"/></svg><span class="ml-[4px] w-[58px] overflow-hidden whitespace-nowrap">VBZ2 &nbsp;...</span><span class="ml-auto flex gap-[3px]"><span class="h-[20px] w-[20px] rounded-[3px] border border-[#a8b8ee] bg-[#4f74de]"><svg class="h-full w-full"><use href="#b-res"/></svg></span><span class="h-[20px] w-[20px] rounded-[3px] border border-[#a8b8ee] bg-[#4f74de]"><svg class="h-full w-full"><use href="#b-max"/></svg></span><span class="h-[20px] w-[20px] rounded-[3px] border border-[#b8b8e0] bg-[#a8607f]"><svg class="h-full w-full"><use href="#b-x"/></svg></span></span></div>
    <div class="absolute left-0 top-[832px] flex h-[30px] w-[159px] items-center rounded-[8px] border border-[#8aa0e8] bg-[linear-gradient(180deg,#7d98e2,#6f8bd8_50%,#7f9de6)] pl-[5px] pr-[4px] text-[14px] text-[#c9d6f6]"><svg class="h-[14px] w-[15px] shrink-0"><use href="#i-chart"/></svg><span class="ml-[4px] w-[58px] overflow-hidden whitespace-nowrap">GMZ&nbsp; 6...</span><span class="ml-auto flex gap-[3px]"><span class="h-[20px] w-[20px] rounded-[3px] border border-[#a8b8ee] bg-[#4f74de]"><svg class="h-full w-full"><use href="#b-res"/></svg></span><span class="h-[20px] w-[20px] rounded-[3px] border border-[#a8b8ee] bg-[#4f74de]"><svg class="h-full w-full"><use href="#b-max"/></svg></span><span class="h-[20px] w-[20px] rounded-[3px] border border-[#b8b8e0] bg-[#a8607f]"><svg class="h-full w-full"><use href="#b-x"/></svg></span></span></div>
    <div class="absolute left-[160px] top-[832px] flex h-[30px] w-[159px] items-center rounded-[8px] border border-[#8aa0e8] bg-[linear-gradient(180deg,#7d98e2,#6f8bd8_50%,#7f9de6)] pl-[5px] pr-[4px] text-[14px] text-[#c9d6f6]"><svg class="h-[14px] w-[15px] shrink-0"><use href="#i-chart"/></svg><span class="ml-[4px] w-[58px] overflow-hidden whitespace-nowrap">SRZ&nbsp; 4...</span><span class="ml-auto flex gap-[3px]"><span class="h-[20px] w-[20px] rounded-[3px] border border-[#a8b8ee] bg-[#4f74de]"><svg class="h-full w-full"><use href="#b-res"/></svg></span><span class="h-[20px] w-[20px] rounded-[3px] border border-[#a8b8ee] bg-[#4f74de]"><svg class="h-full w-full"><use href="#b-max"/></svg></span><span class="h-[20px] w-[20px] rounded-[3px] border border-[#b8b8e0] bg-[#a8607f]"><svg class="h-full w-full"><use href="#b-x"/></svg></span></span></div>
    <div class="absolute left-[320px] top-[832px] flex h-[30px] w-[159px] items-center rounded-[8px] border border-[#8aa0e8] bg-[linear-gradient(180deg,#7d98e2,#6f8bd8_50%,#7f9de6)] pl-[5px] pr-[4px] text-[14px] text-[#c9d6f6]"><svg class="h-[14px] w-[15px] shrink-0"><use href="#i-chart"/></svg><span class="ml-[4px] w-[58px] overflow-hidden whitespace-nowrap">EDZ&nbsp; 4...</span><span class="ml-auto flex gap-[3px]"><span class="h-[20px] w-[20px] rounded-[3px] border border-[#a8b8ee] bg-[#4f74de]"><svg class="h-full w-full"><use href="#b-res"/></svg></span><span class="h-[20px] w-[20px] rounded-[3px] border border-[#a8b8ee] bg-[#4f74de]"><svg class="h-full w-full"><use href="#b-max"/></svg></span><span class="h-[20px] w-[20px] rounded-[3px] border border-[#b8b8e0] bg-[#a8607f]"><svg class="h-full w-full"><use href="#b-x"/></svg></span></span></div>
    <div class="absolute left-[480px] top-[832px] flex h-[30px] w-[159px] items-center rounded-[8px] border border-[#8aa0e8] bg-[linear-gradient(180deg,#7d98e2,#6f8bd8_50%,#7f9de6)] pl-[5px] pr-[4px] text-[14px] text-[#c9d6f6]"><svg class="h-[14px] w-[15px] shrink-0"><use href="#i-chart"/></svg><span class="ml-[4px] w-[58px] overflow-hidden whitespace-nowrap">LKZ&nbsp; 1...</span><span class="ml-auto flex gap-[3px]"><span class="h-[20px] w-[20px] rounded-[3px] border border-[#a8b8ee] bg-[#4f74de]"><svg class="h-full w-full"><use href="#b-res"/></svg></span><span class="h-[20px] w-[20px] rounded-[3px] border border-[#a8b8ee] bg-[#4f74de]"><svg class="h-full w-full"><use href="#b-max"/></svg></span><span class="h-[20px] w-[20px] rounded-[3px] border border-[#b8b8e0] bg-[#a8607f]"><svg class="h-full w-full"><use href="#b-x"/></svg></span></span></div>
    <div class="absolute left-[641px] top-[831px] flex h-[30px] w-[159px] items-center rounded-[8px] border border-[#8aa0e8] bg-[linear-gradient(180deg,#7d98e2,#6f8bd8_50%,#7f9de6)] pl-[5px] pr-[4px] text-[14px] text-[#c9d6f6]"><svg class="h-[14px] w-[15px] shrink-0"><use href="#i-chart"/></svg><span class="ml-[4px] w-[58px] overflow-hidden whitespace-nowrap">SI&nbsp; 30 ...</span><span class="ml-auto flex gap-[3px]"><span class="h-[20px] w-[20px] rounded-[3px] border border-[#a8b8ee] bg-[#4f74de]"><svg class="h-full w-full"><use href="#b-res"/></svg></span><span class="h-[20px] w-[20px] rounded-[3px] border border-[#a8b8ee] bg-[#4f74de]"><svg class="h-full w-full"><use href="#b-max"/></svg></span><span class="h-[20px] w-[20px] rounded-[3px] border border-[#b8b8e0] bg-[#a8607f]"><svg class="h-full w-full"><use href="#b-x"/></svg></span></span></div>
    <div class="absolute left-[960px] top-[833px] flex h-[30px] w-[159px] items-center rounded-[8px] border border-[#8aa0e8] bg-[linear-gradient(180deg,#7d98e2,#6f8bd8_50%,#7f9de6)] pl-[5px] pr-[4px] text-[14px] text-[#c9d6f6]"><svg class="h-[14px] w-[15px] shrink-0"><use href="#i-chart"/></svg><span class="ml-[4px] w-[58px] overflow-hidden whitespace-nowrap">GZZ&nbsp; 6...</span><span class="ml-auto flex gap-[3px]"><span class="h-[20px] w-[20px] rounded-[3px] border border-[#a8b8ee] bg-[#4f74de]"><svg class="h-full w-full"><use href="#b-res"/></svg></span><span class="h-[20px] w-[20px] rounded-[3px] border border-[#a8b8ee] bg-[#4f74de]"><svg class="h-full w-full"><use href="#b-max"/></svg></span><span class="h-[20px] w-[20px] rounded-[3px] border border-[#b8b8e0] bg-[#a8607f]"><svg class="h-full w-full"><use href="#b-x"/></svg></span></span></div>
    <div class="absolute left-[1120px] top-[833px] flex h-[30px] w-[159px] items-center rounded-[8px] border border-[#8aa0e8] bg-[linear-gradient(180deg,#7d98e2,#6f8bd8_50%,#7f9de6)] pl-[5px] pr-[4px] text-[14px] text-[#c9d6f6]"><svg class="h-[14px] w-[15px] shrink-0"><use href="#i-chart"/></svg><span class="ml-[4px] w-[58px] overflow-hidden whitespace-nowrap">MXZ&nbsp; 2...</span><span class="ml-auto flex gap-[3px]"><span class="h-[20px] w-[20px] rounded-[3px] border border-[#a8b8ee] bg-[#4f74de]"><svg class="h-full w-full"><use href="#b-res"/></svg></span><span class="h-[20px] w-[20px] rounded-[3px] border border-[#a8b8ee] bg-[#4f74de]"><svg class="h-full w-full"><use href="#b-max"/></svg></span><span class="h-[20px] w-[20px] rounded-[3px] border border-[#b8b8e0] bg-[#a8607f]"><svg class="h-full w-full"><use href="#b-x"/></svg></span></span></div>
  </main>

  <!-- tabs -->
  <div class="flex h-[24px] shrink-0 items-start border-b-[2px] border-b-[#a9a695] bg-[#ece9d8] pl-[2px] pt-[3px] text-[11.500px]">
    <span class="flex h-[18px] w-[60px] items-center justify-center border-r border-r-[#8c8a7a] border-l border-l-white border-t border-t-white">Торговля</span>
    <span class="ml-[1px] flex h-[18px] w-[62px] items-center justify-center border-r border-r-[#8c8a7a] border-l border-l-white border-t border-t-white">Портфель</span>
    <span class="-mt-[2px] flex h-[20px] w-[50px] items-center justify-center border-r border-r-[#8c8a7a] border-l border-l-white border-t border-t-white bg-[#f3f1e5] pb-[2px]">FORTS</span>
    <span class="flex h-[18px] w-[53px] items-center justify-center border-r border-r-[#8c8a7a] border-l border-l-white border-t border-t-white">Графики</span>
    <span class="ml-[1px] flex h-[18px] w-[55px] items-center justify-center border-r border-r-[#8c8a7a] border-l border-l-white border-t border-t-white">Новости</span>
    <span class="flex h-[18px] w-[55px] items-center justify-center border-r border-r-[#8c8a7a] border-l border-l-white border-t border-t-white">Газпром</span>
  </div>

  <!-- status bar -->
  <footer class="flex h-[20px] shrink-0 items-center bg-[#ece9d8] pl-[1px] pt-[1px]">
    <span class="w-[910px]">Время сервера: 21:05:46; последняя полученная запись: 4338312</span>
    <span class="flex h-[18px] w-[140px] items-center border-x border-x-[#c9c6b4]">
      <svg class="mx-[1px] h-[16px] w-[16px]" viewBox="0 0 16 16"><rect x="1" y="1" width="6" height="4" fill="#30d8e0" stroke="#333"/><rect x="1" y="10" width="6" height="4" fill="#30d8e0" stroke="#333"/><circle cx="11" cy="8" r="3.500" fill="#fff" stroke="#333"/><path d="M7 3h4v2M7 12h6v-2" fill="none" stroke="#2040c0"/></svg>
      <span class="ml-[2px] tracking-[.35px]">10.21.133.155:15100</span>
    </span>
    <span class="ml-[3px] h-[18px] w-[78px] border-x border-x-[#c9c6b4]"></span>
    <span class="ml-[3px] h-[18px] w-[24px] border-l border-l-[#c9c6b4]"></span>
    <span class="flex h-[18px] w-[23px] items-center justify-center border-x border-x-[#c9c6b4]"><svg class="h-[11px] w-[15px]" viewBox="0 0 15 11"><rect x=".5" y=".5" width="14" height="10" fill="#fff" stroke="#333"/><path d="M1 1l6.500 5L14 1" fill="none" stroke="#333"/></svg></span>
    <span class="ml-[2px] flex h-[18px] flex-1 items-center border-l border-l-[#c9c6b4]">
      <span class="ml-[4px] h-[11px] w-[11px] rounded-full bg-[#12d412] outline outline-1 outline-[#0a9a0a]"></span>
      <span class="ml-[11px] tracking-[.35px]">15.11.2012</span>
    </span>
  </footer>

  <!-- taskbar -->
  <div class="flex h-[30px] shrink-0 items-center bg-[linear-gradient(180deg,#3a7ef0_0%,#2e6fe6_6%,#245edb_14%,#2258d6_85%,#1a48b8_100%)] text-[11px] text-white">
    <span class="flex h-[30px] w-[96px] items-center rounded-r-[10px] bg-[linear-gradient(180deg,#4f9a4f,#3c8f3c_12%,#3c963c_75%,#2f7a2f)] pl-[11px] text-[18px] font-bold italic [text-shadow:1px_1px_1px_#1f4f1f]">
      <svg class="mr-[5px] h-[17px] w-[19px]" viewBox="0 0 19 17"><path d="M1 3c3-1.500 5-1.500 8 0l-1 6c-3-1-5-1-8 .5z" fill="#e85a2a"/><path d="M10 3.500c3 1 5 1 8-.5l-1 6c-3 1.500-5 1.500-8 .5z" fill="#7ac043"/><path d="M0 10.500c3-1.500 5-1.500 7.800-.5l-1 6c-3-1-5-1-8 .5z" fill="#3c8ae0"/><path d="M8.800 10.500c3 1 5 1 8-.5l-1 6c-3 1.500-5 1.500-8 .5z" fill="#f0c82a"/></svg>start
    </span>
    <svg class="ml-[14px] h-[15px] w-[15px]"><use href="#i-chrome"/></svg>
    <svg class="ml-[5px] h-[16px] w-[15px]" viewBox="0 0 15 16"><rect x="1" y="2" width="11" height="13" rx="2" fill="#dfeafc" stroke="#1c3f9e"/><path d="M4 6c2-2 5-1 5 2s-3 4-5 2" fill="none" stroke="#1c3f9e" stroke-width="1.500"/><path d="M10 1l3 3-3 1z" fill="#f0a020"/></svg>
    <span class="ml-[14px] flex h-[25px] w-[158px] items-center rounded-[3px] bg-[#3c81f3] pl-[9px]">
      <svg class="h-[15px] w-[16px]" viewBox="0 0 16 15"><path d="M10 1l5 0-3 5 2 1-9 8 2-6-3-1z" fill="#e8962a" stroke="#6a4a1a" stroke-width=".7"/><path d="M3 12L12 3" stroke="#a8c8e8" stroke-width="1.400"/></svg>
      <span class="ml-[5px]">118. Mark Morgan - S...</span>
    </span>
    <span class="ml-[2px] flex h-[25px] w-[158px] items-center rounded-[3px] bg-[#1e4fb0] pl-[9px] shadow-[inset_1px_1px_2px_#113a88]">
      <span class="flex h-[15px] w-[15px] items-center justify-center rounded-[3px] bg-[#127a68]"><svg class="h-[12px] w-[12px]" viewBox="0 0 12 12"><circle cx="6" cy="5.500" r="3.600" fill="none" stroke="#fff" stroke-width="2.200"/><path d="M7 9l2 2.500" stroke="#fff" stroke-width="2"/></svg></span>
      <span class="ml-[6px]">[4F8BC&nbsp; UID: 21601] ...</span>
    </span>
    <span class="ml-[2px] flex h-[25px] w-[158px] items-center rounded-[3px] bg-[#3c81f3] pl-[9px]">
      <svg class="h-[15px] w-[15px]"><use href="#i-chrome"/></svg>
      <span class="ml-[6px]">Два.ч — Бизнес - - G...</span>
    </span>
    <span class="ml-[543px] flex h-[20px] w-[14px] items-center justify-center bg-[#3a70d8] text-[11px]">EN</span>
    <span class="ml-[11px] flex h-[30px] w-[75px] shrink-0 items-center border-l border-l-[#1042a0] bg-[linear-gradient(180deg,#1292e8,#0f8be0_10%,#1185de_85%,#0e6cc8)]">
      <span class="-ml-[9px] flex h-[19px] w-[19px] shrink-0 items-center justify-center rounded-full border border-white bg-[#3a7ee8]"><svg class="h-[9px] w-[6px]" viewBox="0 0 6 9"><path d="M5 1L1.500 4.500 5 8" fill="none" stroke="#fff" stroke-width="1.800"/></svg></span>
      <svg class="ml-[3px] h-[18px] w-[16px]" viewBox="0 0 16 18"><path d="M6 2c3-2 6-1 7 2 2 0 3 3 1 4H4C2 8 2 4 6 2z" fill="#fff" stroke="#333" stroke-width=".7"/><rect x="1" y="8" width="6" height="7" fill="#d04040" stroke="#133"/><path d="M7 14h6" stroke="#109a10" stroke-width="2"/></svg>
      <span class="ml-[6px] text-[11px] tracking-[.2px]">20:05</span>
    </span>
  </div>
</div>
</body>
</html>
